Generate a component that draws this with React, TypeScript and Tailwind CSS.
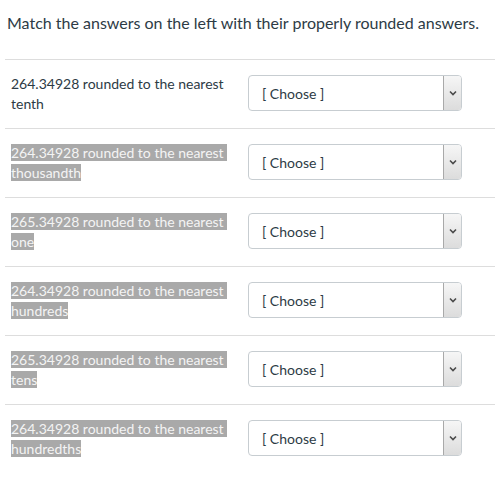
const ROWS = [
  { num: "264.34928", place: "tenth", selected: false },
  { num: "264.34928", place: "thousandth", selected: true },
  { num: "265.34928", place: "one", selected: true },
  { num: "264.34928", place: "hundreds", selected: true },
  { num: "265.34928", place: "tens", selected: true },
  { num: "264.34928", place: "hundredths", selected: true },
];

function ChooseSelect() {
  return (
    <div className="-mt-[2px] flex h-[36px] w-[214px] items-stretch overflow-hidden rounded-[4px] border border-[#c7cdd1] bg-white">
      <div className="flex flex-1 items-center pl-[13px] text-[14px] text-[#2d3b45]">
        [ Choose ]
      </div>
      <div className="flex w-[18px] items-center justify-center border-l border-[#a9a9a9] bg-gradient-to-b from-[#f6f6f6] to-[#dcdcdc]">
        <svg width="8" height="6" viewBox="0 0 8 6">
          <path d="M1 1.5 L4 4.5 L7 1.5" fill="none" stroke="#4a4a4a" strokeWidth="1.6" />
        </svg>
      </div>
    </div>
  );
}

export default function App() {
  return (
    <div className="h-[480px] w-[495px] overflow-hidden bg-white font-['Lato','Noto_Sans',sans-serif] text-[#2d3b45]">
      <p className="px-[7px] pt-[12px] pb-[26px] text-[16px] leading-[21px]">
        Match the answers on the left with their properly rounded answers.
      </p>
      <div className="ml-[5px]">
        {ROWS.map((row, i) => (
          <div
            key={i}
            className="flex h-[69px] items-center border-t border-[#dddddd] pl-[6px]"
          >
            <div className="w-[237px] text-[14px] leading-[20px]">
              {row.selected ? (
                <span className="bg-[#a9a9a9] text-[#f4f4f4]">
                  {row.num} rounded to the nearest{"\u00a0"} {row.place}
                </span>
              ) : (
                <span>
                  {row.num} rounded to the nearest {row.place}
                </span>
              )}
            </div>
            <ChooseSelect />
          </div>
        ))}
      </div>
    </div>
  );
}
